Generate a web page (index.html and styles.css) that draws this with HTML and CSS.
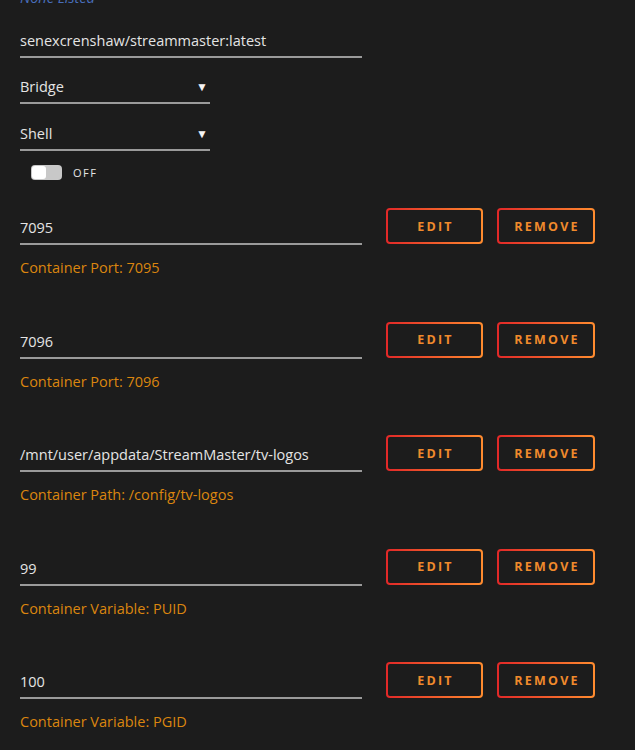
FILE: index.html
```html
<!DOCTYPE html>
<html>
<head>
<meta charset="utf-8">
<link rel="stylesheet" href="styles.css">
</head>
<body>
<div class="page">
  <div class="none">None Listed</div>
  <div class="field wide image">senexcrenshaw/streammaster:latest</div>
  <div class="field select first-select"><span>Bridge</span><span class="arrow">▼</span></div>
  <div class="field select"><span>Shell</span><span class="arrow">▼</span></div>
  <div class="toggle-row">
    <span class="toggle"><span class="knob"></span></span>
    <span class="toggle-label">OFF</span>
  </div>

  <div class="row">
    <div class="left">
      <div class="field wide">7095</div>
      <div class="desc">Container Port: 7095</div>
    </div>
    <div class="buttons"><button class="btn">EDIT</button><button class="btn">REMOVE</button></div>
  </div>
  <div class="row">
    <div class="left">
      <div class="field wide">7096</div>
      <div class="desc">Container Port: 7096</div>
    </div>
    <div class="buttons"><button class="btn">EDIT</button><button class="btn">REMOVE</button></div>
  </div>
  <div class="row">
    <div class="left">
      <div class="field wide">/mnt/user/appdata/StreamMaster/tv-logos</div>
      <div class="desc">Container Path: /config/tv-logos</div>
    </div>
    <div class="buttons"><button class="btn">EDIT</button><button class="btn">REMOVE</button></div>
  </div>
  <div class="row">
    <div class="left">
      <div class="field wide">99</div>
      <div class="desc">Container Variable: PUID</div>
    </div>
    <div class="buttons"><button class="btn">EDIT</button><button class="btn">REMOVE</button></div>
  </div>
  <div class="row">
    <div class="left">
      <div class="field wide">100</div>
      <div class="desc">Container Variable: PGID</div>
    </div>
    <div class="buttons"><button class="btn">EDIT</button><button class="btn">REMOVE</button></div>
  </div>
</div>
</body>
</html>
```
FILE: styles.css
```css
html, body {
  margin: 0;
  padding: 0;
  background: #1c1c1c;
  height: 100%;
  overflow: hidden;
}
.page {
  padding-left: 20px;
  font-family: "Open Sans", "Noto Sans", sans-serif;
  font-size: 14.5px;
  line-height: 20px;
  color: #e4e4e4;
}
.none {
  margin-top: -12px;
  color: #486dba;
  font-style: italic;
}
.field {
  padding-bottom: 5px;
  border-bottom: 2px solid #9a9a9a;
  white-space: nowrap;
}
.wide {
  width: 342px;
}
.image {
  margin-top: 23px;
}
.select {
  width: 190px;
  display: flex;
  justify-content: space-between;
  margin-top: 20px;
}
.first-select {
  margin-top: 19px;
}
.arrow {
  font-size: 12px;
  margin-right: 2px;
  color: #f4f4f4;
}
.toggle-row {
  display: flex;
  align-items: center;
  margin-top: 14px;
  margin-left: 11px;
  height: 15px;
}
.toggle {
  width: 31px;
  height: 15px;
  border-radius: 4px;
  background: #c8c8c8;
  display: flex;
  align-items: center;
  padding: 1px;
  box-sizing: border-box;
}
.knob {
  width: 14px;
  height: 13px;
  background: #ffffff;
  border-radius: 3px;
}
.toggle-label {
  margin-left: 11px;
  font-size: 11px;
  letter-spacing: 1.5px;
  color: #e4e4e4;
}
.row {
  display: flex;
  align-items: flex-start;
  height: 113.6px;
}
.toggle-row + .row {
  margin-top: 28px;
}
.left {
  margin-top: 10px;
}
.desc {
  margin-top: 13px;
  color: #db860f;
}
.buttons {
  display: flex;
  gap: 14px;
  margin-left: 24px;
}
.btn {
  width: 97px;
  height: 36px;
  box-sizing: border-box;
  border: 2px solid transparent;
  border-radius: 4px;
  background:
    linear-gradient(#1c1c1c, #1c1c1c) padding-box,
    linear-gradient(90deg, #e22828, #ff8c2f) border-box;
  color: #f08a2c;
  font-family: "Open Sans", "Noto Sans", sans-serif;
  font-weight: 700;
  font-size: 12.5px;
  letter-spacing: 2.2px;
  padding: 0 0 0 2px;
  cursor: pointer;
}
.btn + .btn {
  width: 98px;
}
```
